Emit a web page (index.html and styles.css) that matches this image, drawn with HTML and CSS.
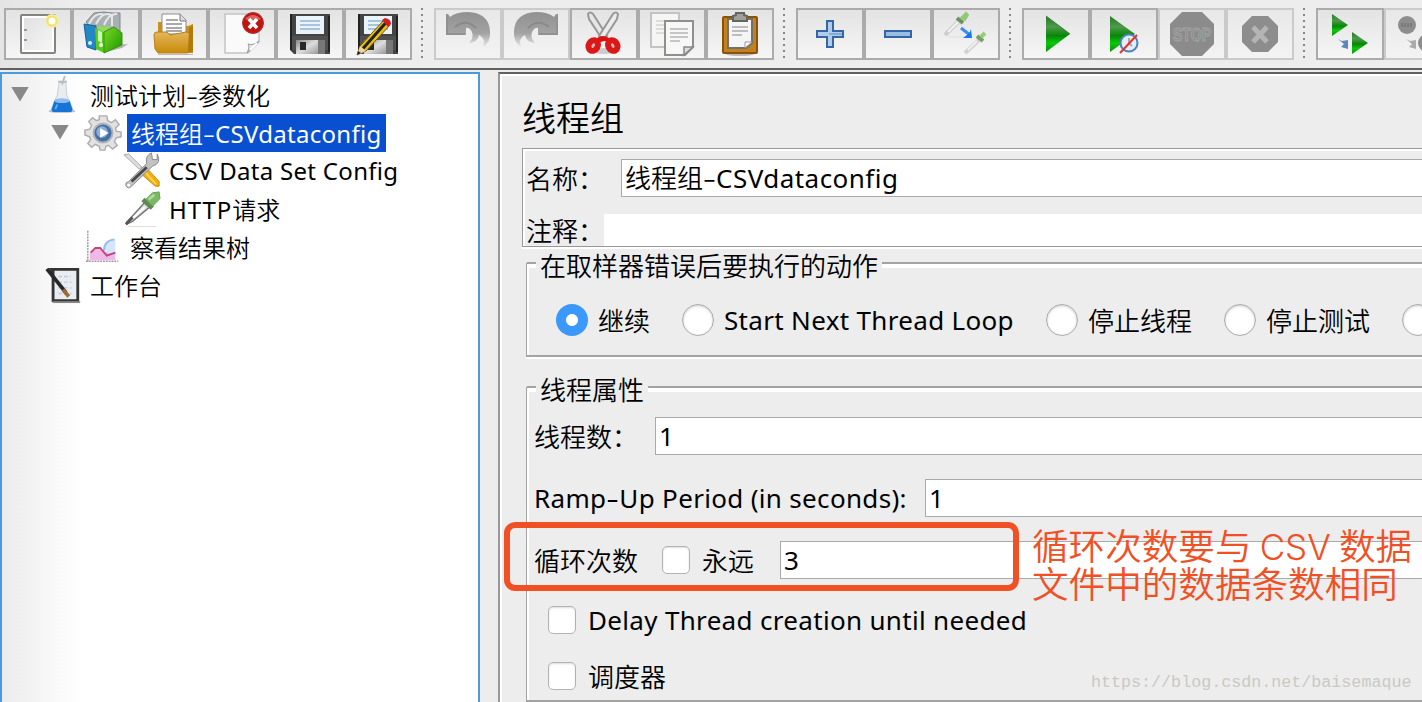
FILE: index.html
```html
<!DOCTYPE html>
<html lang="zh-CN">
<head>
<meta charset="utf-8">
<title>线程组</title>
<link rel="stylesheet" href="styles.css">
</head>
<body>
<svg class="defs" width="0" height="0" aria-hidden="true">
  <defs>
    <linearGradient id="paper" x1="0" y1="0" x2="1" y2="1"><stop offset="0" stop-color="#dedede"/><stop offset="1" stop-color="#f8f8f8"/></linearGradient>
    <linearGradient id="green" x1="0" y1="0" x2="0" y2="1"><stop offset="0" stop-color="#257a25"/><stop offset=".3" stop-color="#4c9a4a"/><stop offset=".55" stop-color="#088608"/><stop offset=".75" stop-color="#0ac80a"/><stop offset="1" stop-color="#078f07"/></linearGradient>
    <linearGradient id="gold" x1="0" y1="0" x2="0" y2="1"><stop offset="0" stop-color="#e3b65e"/><stop offset="1" stop-color="#c98a08"/></linearGradient>
    <linearGradient id="steel" x1="0" y1="0" x2="1" y2="1"><stop offset="0" stop-color="#888"/><stop offset=".5" stop-color="#ddd"/><stop offset="1" stop-color="#999"/></linearGradient>
    <linearGradient id="fade" x1="0" y1="0" x2="0" y2="1"><stop offset="0" stop-color="#919191"/><stop offset=".6" stop-color="#a2a2a2"/><stop offset="1" stop-color="#e8e8e8"/></linearGradient>
    <linearGradient id="folder" x1="0" y1="0" x2="1" y2="1"><stop offset="0" stop-color="#76db24"/><stop offset="1" stop-color="#1f9500"/></linearGradient>
    <symbol id="floppy" viewBox="0 0 64 48">
      <path d="M12 4H52V44H16L12 40Z" fill="#444"/><path d="M12 4H14V40H12Z" fill="#222"/><path d="M50 6H52V42H50Z" fill="#222"/>
      <path d="M14 26H50V40H14Z" fill="#505050"/>
      <path d="M18 6H46V24H18Z" fill="#e9f3fa"/><path d="M22 11H42M22 15H42M22 19H42" stroke="#a9c3da" stroke-width="2"/>
      <path d="M18 30H40V44H18Z" fill="url(#steel)"/><path d="M22 32H28V40H22Z" fill="#292929"/><path d="M40 30H47V44H40Z" fill="#777"/>
    </symbol>
    <symbol id="pipette" viewBox="0 0 40 40">
      <path d="M4 34L23 13L28 18L10 33L4 36Z" fill="#e0e0e0" stroke="#777" stroke-width="1.5"/>
      <path d="M11 29L23 18" stroke="#fff" stroke-width="2"/><path d="M3 36L10 29" stroke="#555" stroke-width="3"/>
      <path d="M21 10L31 19" stroke="#5c8a52" stroke-width="5"/>
      <path d="M24 10L31 3L38 2L39 9L31 17Z" fill="#79b963" stroke="#5da04c"/><path d="M27 10L33 5" stroke="#b1d99c" stroke-width="3"/>
    </symbol>
  </defs>
</svg>

<header class="toolbar">
  <button class="tool" aria-label="New"><svg viewBox="0 0 64 48"><rect x="15" y="5" width="34" height="38" rx="1" fill="url(#paper)" stroke="#85857e" stroke-width="2"/><rect x="17" y="7" width="30" height="34" fill="none" stroke="#fff" stroke-width="2"/><path d="M18 20h3M18 30h3" stroke="#999" stroke-width="2"/><circle cx="46" cy="11" r="7" fill="#f6eda0"/><circle cx="46" cy="11" r="4.5" fill="#fff" stroke="#f0e36a" stroke-width="2"/></svg></button>
  <button class="tool" aria-label="Templates"><svg viewBox="0 0 64 48"><path d="M40 35L54 34L48 38L36 41Z" fill="#888" opacity=".6"/><path d="M12 12L20 3L30 2L38 3L46 3V22L22 24Z" fill="#a9b0b3" stroke="#7e878b"/><path d="M15 14Q22 1 30 5M22 14Q29 1 37 5M30 15Q35 3 43 4M38 16V5" stroke="#e4e7e8" stroke-width="2" fill="none"/><path d="M10 14L22 16V40L13 37Z" fill="#2387c5" stroke="#126197"/><circle cx="16" cy="33" r="2" fill="#d9f0ff"/><path d="M21 18L30 22V43L22 39Z" fill="#57cc18"/><path d="M22 17L36 16L30 22Z" fill="#8ee052"/><path d="M30 22L40 17L48 23V35L30 43Z" fill="url(#folder)" stroke="#36920f"/><path d="M24 20L28 22V33L24 31Z" fill="#cef5b5"/><circle cx="27" cy="35" r="2" fill="#fff"/></svg></button>
  <button class="tool" aria-label="Open"><svg viewBox="0 0 64 48"><path d="M16 12H22L25 16H46L51 14V43H16Z" fill="#c99216"/><path d="M20 24V4H38L44 10V24Z" fill="#fff" stroke="#8c8c8c"/><path d="M24 10H36M24 14H40M24 18H40M24 21H40" stroke="#8d8d8d" stroke-width="1.5"/><path d="M38 4V11H44" fill="#ddd" stroke="#777"/><path d="M12 25Q12 22 15 22H25L28 25L44 22Q48 22 48 25L46 43H16L13 39Z" fill="url(#gold)" stroke="#b98218"/><path d="M47 18L51 15V41L46 43Z" fill="#b2790b"/><path d="M16 44.500H51" stroke="#bbb"/></svg></button>
  <button class="tool" aria-label="Close"><svg viewBox="0 0 64 48"><path d="M15 4H49V32L38 43H15Z" fill="#fafafa" stroke="#c4c4c4" stroke-width="1.5"/><path d="M37 43Q40 37 38 34Q43 36 49 31Z" fill="#e2e2e2" stroke="#999"/><path d="M40 40L47 33" stroke="#fff" stroke-width="2"/><circle cx="43" cy="13" r="10.5" fill="#c31311" stroke="#a63835"/><path d="M35 9Q43 1 51 9Q43 13 35 9" fill="#d9625c"/><path d="M39 9L47 18M47 9L39 18" stroke="#fff" stroke-width="3.5"/></svg></button>
  <button class="tool" aria-label="Save"><svg viewBox="0 0 64 48"><use href="#floppy"/></svg></button>
  <button class="tool" aria-label="Save as"><svg viewBox="0 0 64 48"><use href="#floppy"/><path d="M11 45L14 36L38 10L44 15L20 41Z" fill="#ecc012" stroke="#6a5516"/><path d="M17 38.500L40 12.500" stroke="#222" stroke-width="3"/><path d="M11 45L14 36L20 41Z" fill="#ead3a7"/><path d="M11 45L12 41L15 43Z" fill="#222"/><path d="M36 10L39 8Q45 9 45 14L42 17Z" fill="#d61b22"/></svg></button>
  <i class="sep"></i>
  <button class="tool off" aria-label="Undo"><svg viewBox="0 0 64 48"><g id="undo"><path d="M10 4Q12 3 14 7Q20 2 32 2Q53 3 54 21Q55 32 47 37Q50 28 43 25Q42 32 33 33Q38 28 36 22Q33 17 30 18V25H10Z" fill="url(#fade)"/><path d="M19 17Q30 8 40 18" fill="none" stroke="#8a8a8a" stroke-width="2"/><path d="M11 6V24H29" fill="none" stroke="#919191" stroke-width="2"/></g></svg></button>
  <button class="tool off" aria-label="Redo"><svg viewBox="0 0 64 48"><use href="#undo" transform="matrix(-1 0 0 1 64 0)"/></svg></button>
  <button class="tool" aria-label="Cut"><svg viewBox="0 0 64 48"><ellipse cx="32" cy="41" rx="12" ry="3" fill="#ccc"/><path d="M16 4Q18 1 21 4L35 26L30 29L17 9Z" fill="#e6e6e6" stroke="#999" stroke-width="2"/><path d="M46 4Q44 1 41 4L27 26L32 29L45 9Z" fill="#ececec" stroke="#999" stroke-width="2"/><path d="M25 28Q31 24 37 28L37 32L32 31L26 33Z" fill="#d11"/><ellipse cx="21" cy="35.500" rx="4.500" ry="5.500" transform="rotate(30 21 36)" fill="#f0b8b8" stroke="#da1818" stroke-width="6"/><ellipse cx="41" cy="35.500" rx="4.500" ry="5.500" transform="rotate(-30 41 36)" fill="#f0b8b8" stroke="#da1818" stroke-width="6"/></svg></button>
  <button class="tool" aria-label="Copy"><svg viewBox="0 0 64 48"><rect x="11" y="3" width="28" height="34" fill="#f5f5f5" stroke="#c3c3c3" stroke-width="2"/><path d="M16 11H34M16 15H34M16 19H34M16 23H34" stroke="#d3d3d3" stroke-width="1.5"/><path d="M25 11H53V37L45 45H25Z" fill="#f7f7f7" stroke="#90908a" stroke-width="2"/><path d="M30 19H48M30 23H48M30 27H48M30 31H40" stroke="#b5b5b5" stroke-width="1.5"/><path d="M44 45V37H53Z" fill="#ddd" stroke="#888" stroke-width="1.5"/></svg></button>
  <button class="tool" aria-label="Paste"><svg viewBox="0 0 64 48"><ellipse cx="32" cy="44" rx="14" ry="2" fill="#bbb"/><rect x="15" y="7" width="34" height="36" rx="1" fill="#c28121" stroke="#8b5305" stroke-width="2"/><path d="M20 9H44V33L38 38H20Z" fill="#f5f5f5" stroke="#6e716c" stroke-width="2"/><path d="M24 17H40M24 21H40M24 25H34" stroke="#aaa" stroke-width="1.5"/><path d="M37 38V32H44Z" fill="#fff" stroke="#999"/><path d="M25 11V6L28 5V3H36V5L39 6V11Z" fill="#a0a097" stroke="#62665f" stroke-width="2"/></svg></button>
  <i class="sep"></i>
  <button class="tool" aria-label="Expand"><svg viewBox="0 0 64 48"><path d="M29 11H35V21H45V27H35V37H29V27H19V21H29Z" fill="#b1cce9" stroke="#3465a4" stroke-width="2"/><path d="M31 24H44" stroke="#83abd8" stroke-width="2"/></svg></button>
  <button class="tool" aria-label="Collapse"><svg viewBox="0 0 64 48"><rect x="19" y="21" width="26" height="6" fill="#9cbde2" stroke="#3465a4" stroke-width="2"/></svg></button>
  <button class="tool" aria-label="Toggle"><svg viewBox="0 0 64 48"><path d="M11 25L26 10" stroke="#ccc" stroke-width="4"/><path d="M14 22L25 11" stroke="#f4f4f4" stroke-width="2"/><path d="M23 8L29 13" stroke="#6d9163" stroke-width="4"/><path d="M27 8L32 3L34 5L31 10Z" fill="#91c878" stroke="#91c878" stroke-width="2"/><path d="M31 43L45 30" stroke="#d0d0d0" stroke-width="4"/><path d="M34 40L43 31" stroke="#f0f0f0" stroke-width="2"/><path d="M43 26L49 31" stroke="#76a066" stroke-width="4"/><path d="M47 27L51 23" stroke="#97cd7c" stroke-width="4"/><path d="M15 27H33" stroke="#ddd"/><path d="M27 18L36 25" stroke="#3c8bf2" stroke-width="3"/><path d="M37 19L38 28L29 28L33 25L36 22Z" fill="#1675f0"/></svg></button>
  <i class="sep"></i>
  <button class="tool" aria-label="Start"><svg viewBox="0 0 64 48"><path d="M22 6L46 24L22 42Z" fill="url(#green)"/><path d="M22 6L46 24" stroke="#3e7940"/></svg></button>
  <button class="tool" aria-label="Start no pauses"><svg viewBox="0 0 64 48"><path d="M18 6L43 24L18 42Z" fill="url(#green)"/><circle cx="37" cy="33" r="8.500" fill="#e5edf5" stroke="#4b83bd" stroke-width="2"/><path d="M37 28V33L40 36" stroke="#aaa" stroke-width="2" fill="none"/><path d="M28 43L45 25" stroke="#e33236" stroke-width="2"/></svg></button>
  <button class="tool off" aria-label="Stop"><svg viewBox="0 0 64 48"><path d="M22 2H42L54 14V34L42 46H22L10 34V14Z" fill="#8b8b8b"/><text x="32" y="30.500" class="stop-word" textLength="38" lengthAdjust="spacingAndGlyphs">STOP</text></svg></button>
  <button class="tool off" aria-label="Shutdown"><svg viewBox="0 0 64 48"><path d="M24 6H40L50 16V32L40 42H24L14 32V16Z" fill="#8d8d8d"/><path d="M25 17L39 32M39 17L25 32" stroke="#b4b4b4" stroke-width="5"/></svg></button>
  <i class="sep"></i>
  <button class="tool" aria-label="Remote start"><svg viewBox="0 0 64 48"><path d="M14 4L30 15L14 26Z" fill="url(#green)"/><path d="M34 22L50 33L34 44Z" fill="url(#green)"/><path d="M20 29L24 31L30 30V39L23 37L26 34Z" fill="#5b86c2"/></svg></button>
  <button class="tool off" aria-label="Remote stop"><svg viewBox="0 0 64 48"><circle cx="21" cy="15" r="9" fill="#8d8d8d"/><path d="M15 15H27" stroke="#7b7b7b" stroke-width="4" stroke-dasharray="2 1"/><path d="M20 29L24 31L30 30V39L23 37L26 34Z" fill="#aaa"/><circle cx="41" cy="33" r="9" fill="#8d8d8d"/></svg></button>
</header>

<main class="workspace">
  <nav class="tree">
    <div class="node"><i class="arrow"></i><svg class="nicon flask" viewBox="0 0 40 40"><ellipse cx="20" cy="37" rx="14" ry="2" fill="#b4bfcc"/><path d="M17 6L15 20L9 34Q8 38 12 38H28Q32 38 31 34L25 20L24 6Z" fill="#e8ecf0" stroke="#c9ced3"/><path d="M23 0L20 9M16 6H25" stroke="#bbb" stroke-width="2"/><path d="M12 26H28L31 35Q31 38 28 38H12Q9 38 9 35Z" fill="#1773d5"/><ellipse cx="20" cy="26" rx="8" ry="2.500" fill="#8cbdf0"/><path d="M15 30L13 35" stroke="#69adf0" stroke-width="2"/></svg><span class="label">测试计划<span class="dash">-</span>参数化</span></div>
    <div class="node level-1"><i class="arrow"></i><svg class="nicon gear" viewBox="0 0 40 40"><path d="M16 2H24L25 7L29 9L33 6L37 11L33 15L34 18L39 19V24L34 25L32 29L35 33L30 37L26 33L23 34L22 38H17L16 34L12 32L8 35L4 31L7 27L6 24L1 22V17L6 16L8 12L5 8L9 4L13 7L16 6Z" fill="#e2e2e2" stroke="#adadad" stroke-width="1.500"/><circle cx="20" cy="20" r="10" fill="#4570a7" stroke="#b0b4b9" stroke-width="2"/><circle cx="19" cy="19" r="6" fill="#8fb0d6"/><path d="M17 15L26 20L17 25Z" fill="#fff"/></svg><span class="label selected">线程组<span class="dash">-</span><span class="lat">CSVdataconfig</span></span></div>
    <div class="node level-2"><svg class="nicon" viewBox="0 0 40 40"><path d="M1 3L6 2L20 16L17 18Z" fill="#ddd" stroke="#aaa"/><path d="M20 19L25 17L38 31V36L34 36L19 23Z" fill="#f3af0c" stroke="#c48a15"/><path d="M22 20L35 34" stroke="#ffd34e" stroke-width="2"/><path d="M25 12Q23 4 30 1L31 8L36 8V2Q41 12 31 15L9 36Q5 40 3 35Q2 32 6 31Z" fill="#c2c2c2" stroke="#888"/><path d="M9 31L25 16" stroke="#474747" stroke-width="3"/><circle cx="6" cy="35" r="1.500" fill="#fff"/></svg><span class="label lat">CSV Data Set Config</span></div>
    <div class="node level-2"><svg class="nicon" viewBox="0 0 40 40"><use href="#pipette"/><path d="M5 38.500H35" stroke="#ddd"/></svg><span class="label"><span class="lat http">HTTP</span>请求</span></div>
    <div class="node level-1 leaf"><svg class="nicon" viewBox="0 0 40 40"><path d="M4 3V36M2 35H36" stroke="#999" stroke-width="1.500" stroke-dasharray="2 1"/><path d="M6 34V26Q10 21 15 20Q19 27 27 24L33 26V34Z" fill="#f0b8e8"/><path d="M33 12Q23 12 21 21Q25 30 33 25Z" fill="#d5e6fc"/><path d="M32 12Q21 13 21 24" fill="none" stroke="#91bff0" stroke-width="2"/><path d="M7 26L12 21H17L24 29L33 26" fill="none" stroke="#bd4778" stroke-width="2"/></svg><span class="label">察看结果树</span></div>
    <div class="node leaf"><svg class="nicon" viewBox="0 0 40 40"><path d="M4 2H36V38H7V7Z" fill="#343434"/><path d="M10 5H33V35H10Z" fill="#e9edf1"/><path d="M14 11H27M14 17H28M14 23H28M14 29H28" stroke="#becddd" stroke-width="1.500" stroke-dasharray="4 2"/><path d="M2 3L22 28" stroke="#282828" stroke-width="4"/><path d="M19 25L25 32" stroke="#9b6d32" stroke-width="4"/><path d="M8 38H37" stroke="#888" stroke-width="2"/></svg><span class="label">工作台</span></div>
  </nav>

  <section class="editor">
    <h1 class="title">线程组</h1>
    <div class="ident">
      <div class="line name"><label>名称：</label><div class="field">线程组<span class="dash">-</span><span class="lat config">CSVdataconfig</span></div></div>
      <div class="line note"><label>注释：</label><div class="field bare"></div></div>
    </div>

    <div class="group actions">
      <div class="legend"><span>在取样器错误后要执行的动作</span></div>
      <div class="radios">
        <span class="opt"><i class="radio on"></i>继续</span>
        <span class="opt"><i class="radio"></i><span class="lat next">Start Next Thread Loop</span></span>
        <span class="opt"><i class="radio"></i>停止线程</span>
        <span class="opt"><i class="radio"></i>停止测试</span>
        <span class="opt"><i class="radio"></i></span>
      </div>
    </div>

    <div class="group props">
      <div class="legend"><span>线程属性</span></div>
      <div class="line threads"><label>线程数：</label><div class="field"><span class="lat">1</span></div></div>
      <div class="line ramp"><label class="lat">Ramp<span class="dash">-</span>Up Period (in seconds):</label><div class="field"><span class="lat">1</span></div></div>
      <div class="line loops"><label>循环次数</label><span class="opt"><i class="check"></i>永远</span><div class="field"><span class="lat">3</span></div></div>
      <div class="line single"><span class="opt"><i class="check"></i><span class="lat">Delay Thread creation until needed</span></span></div>
      <div class="line single last"><span class="opt"><i class="check"></i>调度器</span></div>
    </div>
  </section>
</main>

<div class="marker"></div>
<p class="remark"><span>循环次数要与 <span class="csv">CSV</span> 数据</span><span>文件中的数据条数相同</span></p>
<div class="watermark">https://blog.csdn.net/baisemaque</div>
</body>
</html>
```
FILE: styles.css
```css
* { box-sizing: border-box; }
body {
  margin: 0;
  width: 1422px;
  height: 702px;
  overflow: hidden;
  position: relative;
  background: #ededed;
  color: #000;
  font: 26px/38px "Noto Sans CJK SC", sans-serif;
  font-weight: 350;
  white-space: nowrap;
}
.defs { position: absolute; }
.lat { font-family: "Noto Sans", "Noto Sans CJK SC", sans-serif; font-weight: 400; letter-spacing: .0125em; line-height: 1; }
.dash { display: inline-block; width: .5em; line-height: 1; text-align: center; letter-spacing: 0; transform: scaleX(1.5); }

.toolbar {
  display: flex;
  height: 70px;
  padding: 8px 0 0 4px;
  border-bottom: 2px solid #606060;
  background: linear-gradient(90deg, #e4e4e4, #ededed 80px);
  overflow: hidden;
}
.tool {
  flex: none;
  width: 68px;
  height: 52px;
  padding: 0;
  border: 2px solid #ababab;
  background: linear-gradient(#e3e3e3, #f6f6f6);
}
.tool.off { border-color: #cacaca; background: linear-gradient(#e8e8e8, #f3f3f3); }
.tool svg { display: block; width: 64px; height: 48px; }
.stop-word { font: bold 18px "Liberation Sans", sans-serif; text-anchor: middle; fill: #8b8b8b; stroke: #a5a5a5; stroke-width: 1px; }
.sep {
  flex: none;
  width: 2px;
  height: 50px;
  margin: 0 11px 0 9px;
  background: repeating-linear-gradient(#888 0 2px, transparent 2px 6px);
}

.workspace { display: flex; gap: 18px; height: 632px; padding-top: 2px; }
.tree {
  flex: none;
  width: 480px;
  height: 640px;
  border: 2px solid #4a9ae0;
  padding: 2px 0 0 8px;
  background: linear-gradient(90deg, #ececec, #fff 80px);
  font-size: 24px;
  line-height: 38px;
}
.node { display: flex; align-items: center; height: 38px; }
.node.level-1 { padding-left: 40px; }
.node.level-2 { padding-left: 113px; }
.node.leaf { padding-left: 35px; }
.node.level-1.leaf { padding-left: 74px; }
.arrow {
  width: 18px;
  height: 15px;
  margin: 0 14px 2px 1px;
  background: #888;
  clip-path: polygon(0 0, 100% 0, 50% 100%);
}
.nicon { flex: none; width: 38px; height: 38px; }
.gear { margin-left: 1px; }
.label { height: 38px; padding: 0 4px; }
.label.lat { line-height: 38px; }
.http { letter-spacing: .04em; }
.flask { margin-right: 5px; }
.selected { width: 259px; margin-left: 5px; background: #094fd1; color: #fff; }
.leaf .label, .level-2 .label { margin-left: 4px; }
.node.leaf:last-child .label { margin-left: 3px; }

.editor {
  flex: 1;
  min-width: 0;
  height: 640px;
  border: solid #606060;
  border-width: 2px 0 0 2px;
  border-left-color: #999;
  box-shadow: inset 2px 2px #fff;
  padding: 2px 0 0 2px;
}
.title { margin: 0; height: 72px; padding: 12px 0 0 20px; font-size: 34px; line-height: 58px; font-weight: 350; }
.ident {
  height: 99px;
  margin-left: 20px;
  padding-top: 10px;
  border: 1px solid #999;
  border-right: 0;
  box-shadow: inset 2px 2px #fff, 0 2px #fff;
}
.line { display: flex; align-items: center; height: 38px; }
.line label { flex: none; line-height: 36px; }
.name label, .note label { padding-left: 3px; }
.name label { width: 98px; }
.note { height: 32px; margin-top: 17px; }
.note label { width: 81px; }
.field {
  flex: 1;
  height: 38px;
  padding-left: 3px;
  border: 1px solid #aaa;
  border-right: 0;
  background: #fff;
  line-height: 34px;
}
.field.bare { border: 0; height: 32px; }
.config { letter-spacing: .018em; }

.group {
  display: flow-root;
  margin-left: 24px;
  border-left: 1px solid #a3a3a3;
  border-bottom: 2px solid #a3a3a3;
  box-shadow: inset 2px 0 #fff, 0 2px #fff;
}
.legend { display: flex; align-items: center; gap: 4px; height: 36px; margin-top: -16px; line-height: 38px; }
.legend::before, .legend::after { content: ""; height: 4px; border-top: 2px solid #a3a3a3; background: #fff; }
.legend::before { width: 9px; }
.legend::after { flex: 1; }
.actions { height: 94px; margin-top: 16px; }
.radios { display: flex; gap: 32px; padding: 18px 0 0 29px; }
.opt { display: flex; flex: none; align-items: center; height: 38px; }
.radio {
  flex: none;
  width: 32px;
  height: 32px;
  margin-right: 10px;
  border: 1px solid #aaa;
  border-radius: 50%;
  background: #fff;
  box-shadow: inset 0 1px 3px #ccc;
}
.radio.on { border: 0; box-shadow: none; background: radial-gradient(circle, #fff 5.5px, #3b99fc 6.5px); }
.next { width: 290px; }
.props { height: 315px; margin-top: 30px; }
.threads { margin-top: 10px; }
.props .line label { margin-left: 7px; }
.threads label { width: 121px; }
.ramp { margin-top: 24px; }
.ramp label { width: 391px; }
.loops { margin-top: 24px; }
.loops label { width: 128px; }
.loops .opt { width: 118px; }
.check {
  flex: none;
  width: 28px;
  height: 28px;
  margin-right: 12px;
  border: 1px solid #b3b3b3;
  border-radius: 5px;
  background: #fff;
  box-shadow: inset 0 1px 2px #ddd;
}
.single { margin-top: 22px; padding-left: 21px; }
.single.last { margin-top: 18px; }

.marker { position: absolute; left: 504px; top: 522px; width: 515px; height: 69px; border: 6px solid #f15025; border-radius: 11px; }
.remark {
  position: absolute;
  left: 1032px;
  top: 526px;
  display: grid;
  grid-template-rows: 38px 38px;
  margin: 0;
  color: #f15025;
  font-size: 36.6px;
  line-height: 38px;
  font-weight: 350;
}
.csv { font-family: Inter, "Liberation Sans", sans-serif; font-size: 35px; font-weight: 300; line-height: 1; }
.watermark { position: absolute; left: 1091px; top: 669px; color: #c9c9c4; font: 16.7px/28px "Liberation Mono", monospace; }
```
